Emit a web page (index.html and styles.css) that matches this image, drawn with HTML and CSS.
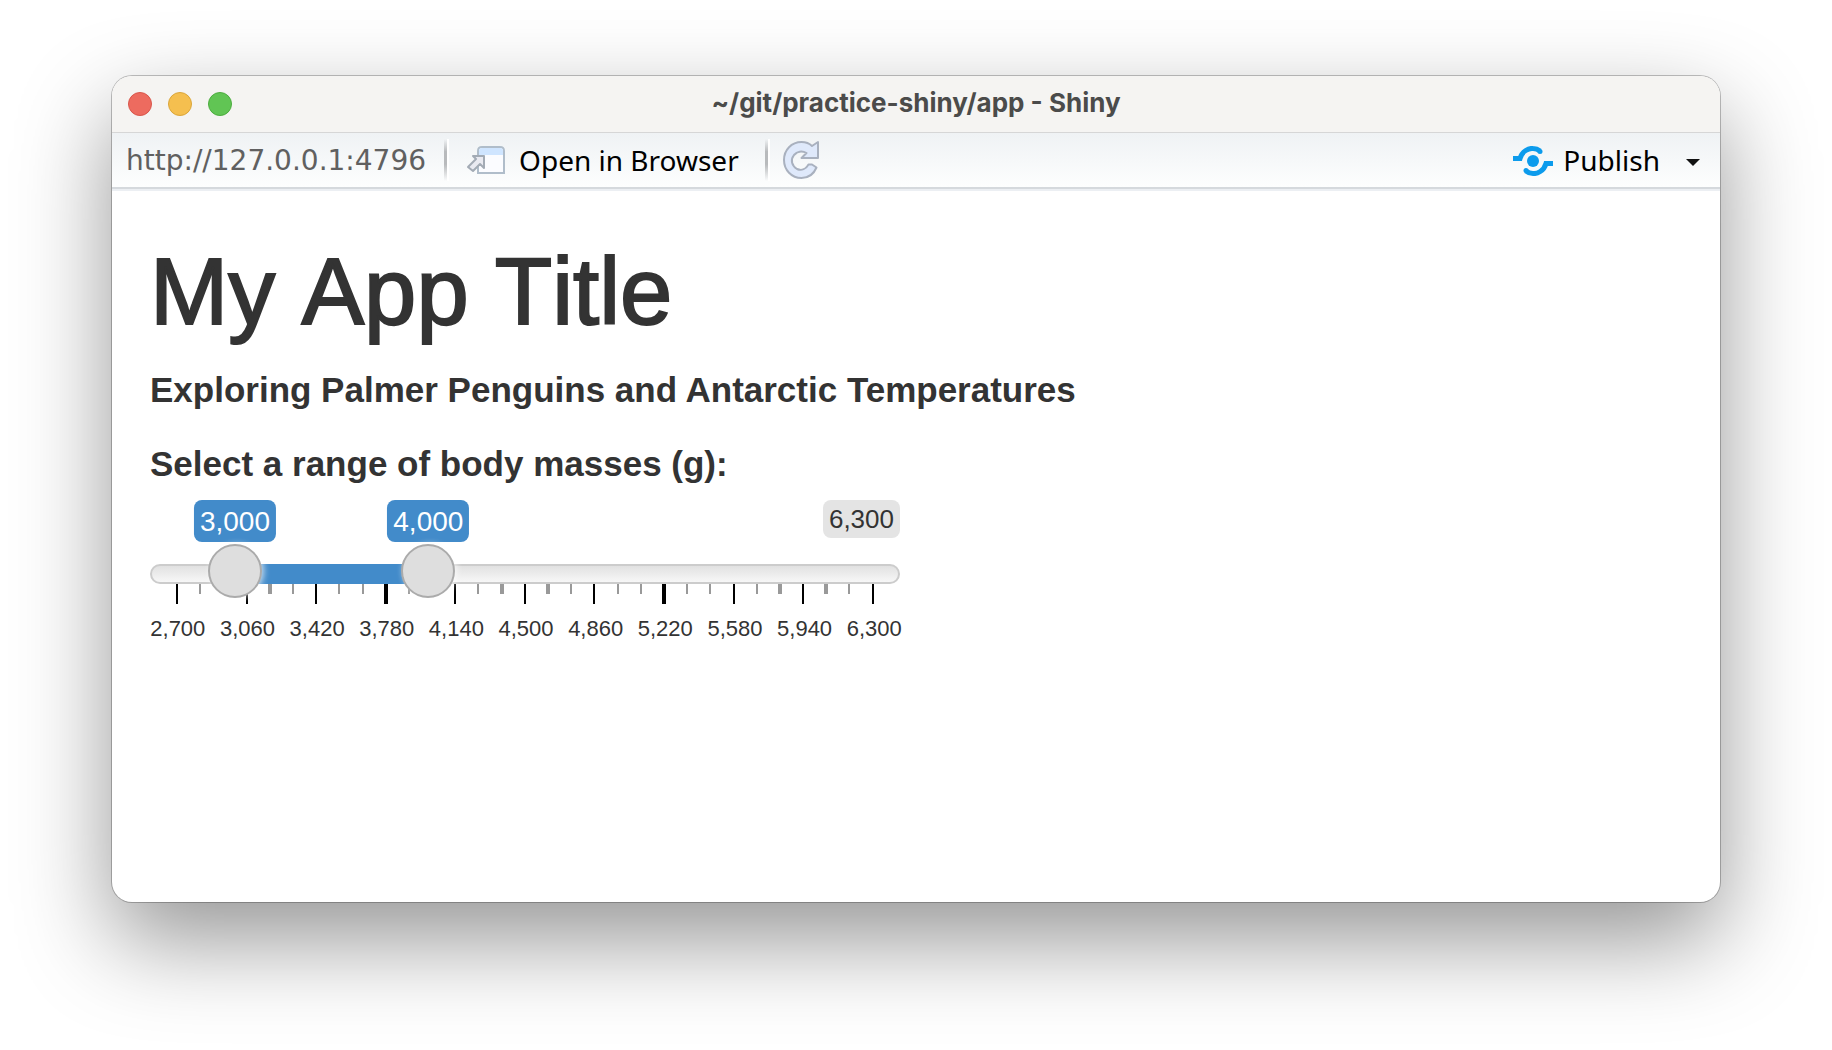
FILE: index.html
```html
<!DOCTYPE html>
<html lang="en">
<head>
<meta charset="utf-8">
<title>~/git/practice-shiny/app - Shiny</title>
<link rel="stylesheet" href="styles.css">
</head>
<body>
<div class="window">
  <header class="titlebar">
    <div class="lights">
      <button class="light light-close" aria-label="Close"></button>
      <button class="light light-minimize" aria-label="Minimize"></button>
      <button class="light light-zoom" aria-label="Zoom"></button>
    </div>
    <div class="window-title">~/git/practice-shiny/app - Shiny</div>
  </header>
  <nav class="toolbar">
    <span class="url">http://127.0.0.1:4796</span>
    <span class="separator"></span>
    <button class="tool open-browser">
      <svg width="40" height="30" viewBox="0 0 40 30" aria-hidden="true">
        <path d="M13 28V6q0-4 4-4h18q4 0 4 4v22z" fill="#fbfcff" stroke="#b0bdca" stroke-width="2"/>
        <path d="M14 10V6q0-3 3-3h18q3 0 3 3v4z" fill="#cfe5ff"/>
        <path d="M8 11h11v12l-4-4-7 7-5-4 8-8z" fill="#e9eaf1" stroke="#a3abb5" stroke-width="2" stroke-linejoin="round"/>
      </svg>
      Open in Browser
    </button>
    <span class="separator"></span>
    <button class="tool reload" aria-label="Reload">
      <svg width="38" height="40" viewBox="0 0 38 40" aria-hidden="true">
        <path d="M30 6L36 2V18H19.500L24.500 13C20 10.500 15 11.500 12 15 8 20 10 26 15 29 19.500 31 24 29 26.500 24.500H30L34.500 27.500C31.500 34.500 26 38 19.500 38 9.500 38 2 30 2 20S9.500 2 19.500 2Q26 2 30 6z" fill="#dfe9fb" stroke="#a9b1bf" stroke-width="2" stroke-linejoin="round"/>
      </svg>
    </button>
    <button class="tool publish">
      <svg width="40" height="30" viewBox="0 0 40 30" fill="none" stroke="#0c9bec" stroke-width="5" aria-hidden="true">
        <path d="M0 12.500h7C9 5 16 2 20 2.500q4 0 7 2.500"/>
        <path d="M40 17.500h-7C31 25 24 28 20 27.500q-4 0-7-2.500"/>
        <circle cx="20" cy="15" r="6" fill="#0c9bec" stroke="none"/>
        <circle cx="27" cy="5.500" r="2.500" fill="#0c9bec" stroke="none"/>
        <circle cx="13" cy="24.500" r="2.500" fill="#0c9bec" stroke="none"/>
      </svg>
      Publish
    </button>
    <button class="tool publish-menu" aria-label="Publishing options"><span class="caret"></span></button>
  </nav>
  <main class="app">
    <h1>My App Title</h1>
    <p class="subtitle">Exploring Palmer Penguins and Antarctic Temperatures</p>
    <label class="slider-label" for="mass-from">Select a range of body masses (g):</label>
    <div class="slider">
      <div class="values">
        <output class="value" for="mass-from" style="--ratio: .08333">3,000</output>
        <output class="value" for="mass-to" style="--ratio: .36111">4,000</output>
        <span class="max">6,300</span>
      </div>
      <div class="track">
        <div class="bar" style="--from: .08333; --to: .36111"></div>
        <input id="mass-from" type="range" min="2700" max="6300" step="20" value="3000" aria-label="Minimum body mass (g)">
        <input id="mass-to" type="range" min="2700" max="6300" step="20" value="4000" aria-label="Maximum body mass (g)">
      </div>
      <div class="ticks">
        <i class="major"></i><i></i><i></i><i class="major"></i><i class="wide"></i><i></i><i class="major"></i><i></i><i></i><i class="major wide"></i><i></i><i></i><i class="major"></i><i></i><i class="wide"></i><i class="major"></i><i class="wide"></i><i></i><i class="major"></i><i></i><i></i><i class="major wide"></i><i></i><i></i><i class="major"></i><i></i><i class="wide"></i><i class="major"></i><i class="wide"></i><i></i><i class="major"></i>
      </div>
      <div class="scale">
        <span>2,700</span><span>3,060</span><span>3,420</span><span>3,780</span><span>4,140</span><span>4,500</span><span>4,860</span><span>5,220</span><span>5,580</span><span>5,940</span><span>6,300</span>
      </div>
    </div>
  </main>
</div>
</body>
</html>
```
FILE: styles.css
```css
* { box-sizing: border-box; }

body {
  margin: 0;
  min-height: 100vh;
  padding: 76px 112px 148px;
  display: flex;
  background: #fff;
  color: #333;
  font-family: "Liberation Sans", Arial, sans-serif;
}

button {
  margin: 0;
  padding: 0;
  border: 0;
  background: none;
  color: inherit;
  font: inherit;
}

.window {
  flex: 1;
  min-width: 0;
  display: flex;
  flex-direction: column;
  background: #fff;
  border-radius: 20px;
  box-shadow: 0 0 0 1px rgba(0, 0, 0, .24), 0 38px 94px rgba(0, 0, 0, .42);
}

.titlebar {
  display: grid;
  grid-template-columns: 1fr auto 1fr;
  align-items: center;
  height: 57px;
  padding: 0 16px;
  background: #f5f4f2;
  border-bottom: 1px solid #d6d6d6;
  border-radius: 20px 20px 0 0;
}

.lights { display: flex; gap: 16px; }

.light {
  width: 24px;
  height: 24px;
  border: 1px solid;
  border-radius: 50%;
}

.light-close { background: #ed6b5f; border-color: #d9564b; }
.light-minimize { background: #f5bf4f; border-color: #dba63a; }
.light-zoom { background: #61c554; border-color: #4cad3f; }

.window-title {
  padding-bottom: 2px;
  color: #4b4b4a;
  font: 700 26px/32px Inter, sans-serif;
}

.toolbar {
  display: flex;
  align-items: center;
  height: 56px;
  padding: 0 14px;
  background: linear-gradient(#eff2f4, #fdfefe);
  border-bottom: 2px solid #d5d9dd;
  box-shadow: 0 2px #eceff3;
  color: #000;
  font: 28px/36px "Noto Sans", sans-serif;
}

.url {
  padding-top: 2px;
  color: #606060;
  font: 28px/36px "DejaVu Sans", sans-serif;
}

.separator {
  width: 5px;
  height: 42px;
  margin: 0 16px 0 18px;
  border-right: 2px solid #fff;
  background: linear-gradient(transparent, #b8babc 30%, #b8babc 60%, transparent);
}

.tool { display: flex; align-items: center; gap: 14px; }
.open-browser { padding-right: 8px; }
.reload { margin-left: -4px; }
.publish { margin-left: auto; gap: 10px; }
.publish svg { margin-top: 2px; }
.publish-menu { margin-left: 20px; padding: 8px 6px 4px; }

.caret {
  border: 7px solid transparent;
  border-top-color: #111;
  border-bottom: 0;
}

.app { padding: 54px 38px; }

h1 {
  margin: 0;
  font-size: 94px;
  font-weight: 400;
  font-kerning: none;
  line-height: 98px;
  -webkit-text-stroke: 2px #333;
}

.subtitle, .slider-label {
  display: block;
  margin: 0;
  font-size: 35px;
  font-weight: 700;
  line-height: 50px;
}

.subtitle { margin: 24px 0; }

.slider {
  width: 750px;
  max-width: 100%;
  margin-top: 11px;
}

.values { position: relative; height: 64px; }

.value, .max {
  position: absolute;
  top: 0;
  padding: 0 6px;
  border-radius: 8px;
}

.value {
  left: calc(27px + (100% - 54px) * var(--ratio));
  transform: translateX(-50%);
  padding-top: 2px;
  background: #428bca;
  color: #fff;
  font-size: 28px;
  line-height: 40px;
}

.max {
  right: 0;
  background: #e4e4e4;
  font-size: 26px;
  line-height: 38px;
}

.track {
  position: relative;
  height: 20px;
  border: 2px solid #ccc;
  border-radius: 10px;
  background: linear-gradient(#e1e1e1, #f7f7f7);
}

.bar {
  position: absolute;
  top: -2px;
  bottom: -2px;
  left: calc(25px + (100% - 50px) * var(--from));
  right: calc(25px + (100% - 50px) * (1 - var(--to)));
  background: #428bca;
}

.track input {
  position: absolute;
  top: -22px;
  left: -2px;
  z-index: 1;
  width: calc(100% + 4px);
  height: 54px;
  margin: 0;
  background: none;
  appearance: none;
  pointer-events: none;
}

.track input::-webkit-slider-thumb {
  width: 54px;
  height: 54px;
  border: 2px solid #ababab;
  border-radius: 50%;
  background: #dedede;
  box-shadow: 2px 0 6px rgba(255, 255, 255, .7);
  appearance: none;
  pointer-events: auto;
}

.ticks {
  display: flex;
  justify-content: space-between;
  height: 20px;
  padding: 0 25px;
}

.ticks i {
  width: 4px;
  height: 10px;
  padding: 0 1px;
  background: #999 content-box;
}

.ticks .major { height: 20px; background-color: #000; }
.ticks .wide { padding: 0; }

.scale {
  display: flex;
  margin: 10px -9px 0 -7px;
  font-size: 22px;
  line-height: 30px;
}

.scale span { flex: 1; text-align: center; }
```
